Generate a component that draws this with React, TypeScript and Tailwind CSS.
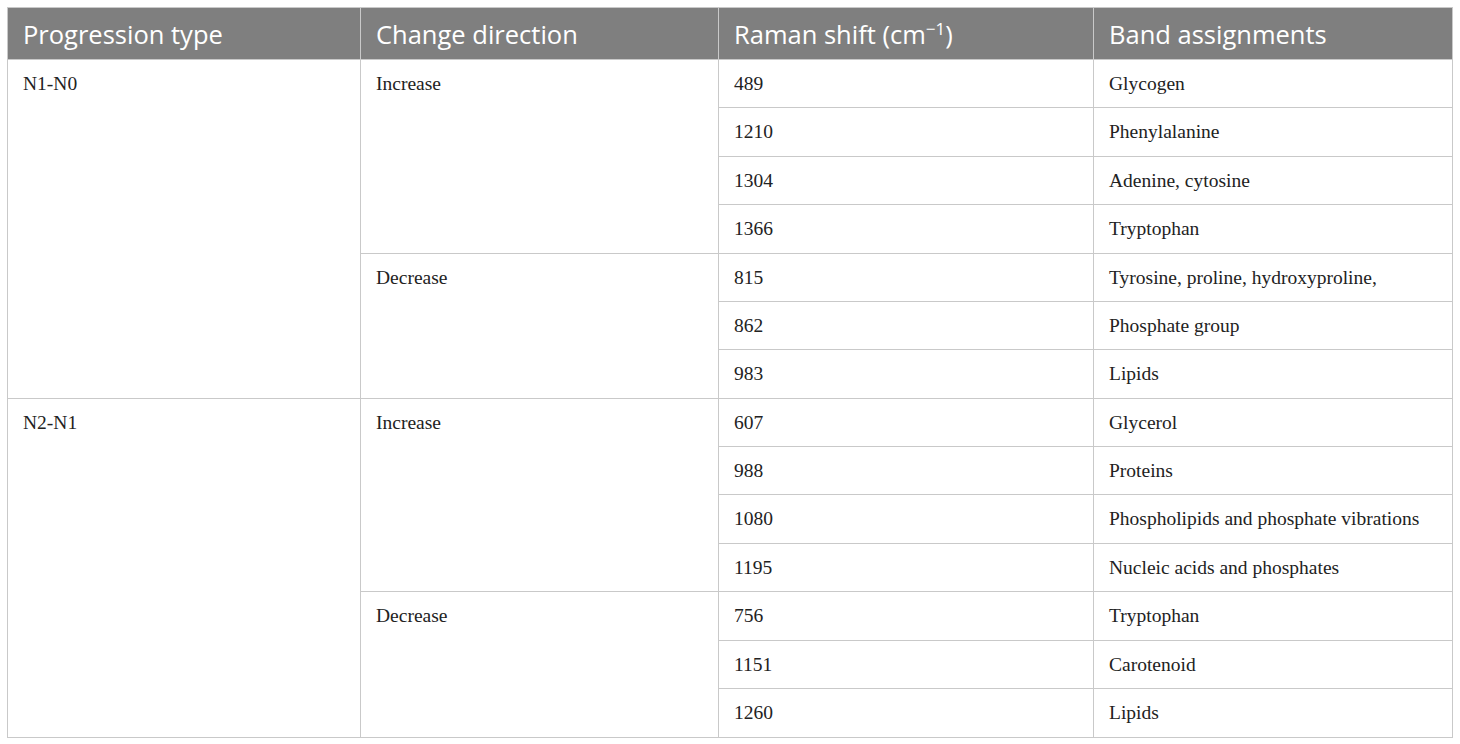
import React from "react";

/* ---------------- Data ---------------- */
type Band = { shift: string; label: string; h: string };
type Group = { direction: string; bands: Band[] };
type Progression = { type: string; groups: Group[] };

const DATA: Progression[] = [
  {
    type: "N1-N0",
    groups: [
      {
        direction: "Increase",
        bands: [
          { shift: "489", label: "Glycogen", h: "h-[48px]" },
          { shift: "1210", label: "Phenylalanine", h: "h-[49px]" },
          { shift: "1304", label: "Adenine, cytosine", h: "h-[48px]" },
          { shift: "1366", label: "Tryptophan", h: "h-[49px]" },
        ],
      },
      {
        direction: "Decrease",
        bands: [
          { shift: "815", label: "Tyrosine, proline, hydroxyproline,", h: "h-[48px]" },
          { shift: "862", label: "Phosphate group", h: "h-[48px]" },
          { shift: "983", label: "Lipids", h: "h-[49px]" },
        ],
      },
    ],
  },
  {
    type: "N2-N1",
    groups: [
      {
        direction: "Increase",
        bands: [
          { shift: "607", label: "Glycerol", h: "h-[48px]" },
          { shift: "988", label: "Proteins", h: "h-[48px]" },
          { shift: "1080", label: "Phospholipids and phosphate vibrations", h: "h-[49px]" },
          { shift: "1195", label: "Nucleic acids and phosphates", h: "h-[48px]" },
        ],
      },
      {
        direction: "Decrease",
        bands: [
          { shift: "756", label: "Tryptophan", h: "h-[49px]" },
          { shift: "1151", label: "Carotenoid", h: "h-[48px]" },
          { shift: "1260", label: "Lipids", h: "h-[49px]" },
        ],
      },
    ],
  },
];

const cell = "border border-[#c9c9c9] px-[15px] align-top pt-[11px] text-left";
const head = "border border-[#c9c9c9] px-[15px] text-left font-normal";

export default function App() {
  return (
    <main className="min-h-screen bg-white pl-[7px] pt-[7px]">
      <table className="border-collapse table-fixed w-[1445px] font-['Liberation_Serif',serif] text-[19.5px] leading-[26px] text-[#222]">
        <colgroup>
          <col className="w-[353px]" />
          <col className="w-[358px]" />
          <col className="w-[375px]" />
          <col className="w-[359px]" />
        </colgroup>
        <thead>
          <tr className="h-[52px] bg-[#7f7f7f] text-white font-['Open_Sans',sans-serif] text-[25.5px] leading-[30px]">
            <th className={head}>Progression type</th>
            <th className={head}>Change direction</th>
            <th className={head}>
              Raman shift (cm<sup className="text-[17px]">−1</sup>)
            </th>
            <th className={head}>Band assignments</th>
          </tr>
        </thead>
        <tbody>
          {DATA.map((p) => {
            const total = p.groups.reduce((n, g) => n + g.bands.length, 0);
            return p.groups.map((g, gi) =>
              g.bands.map((b, bi) => (
                <tr key={p.type + g.direction + b.shift} className={b.h}>
                  {gi === 0 && bi === 0 && (
                    <td rowSpan={total} className={cell}>
                      {p.type}
                    </td>
                  )}
                  {bi === 0 && (
                    <td rowSpan={g.bands.length} className={cell}>
                      {g.direction}
                    </td>
                  )}
                  <td className={cell}>{b.shift}</td>
                  <td className={cell}>{b.label}</td>
                </tr>
              ))
            );
          })}
        </tbody>
      </table>
    </main>
  );
}
